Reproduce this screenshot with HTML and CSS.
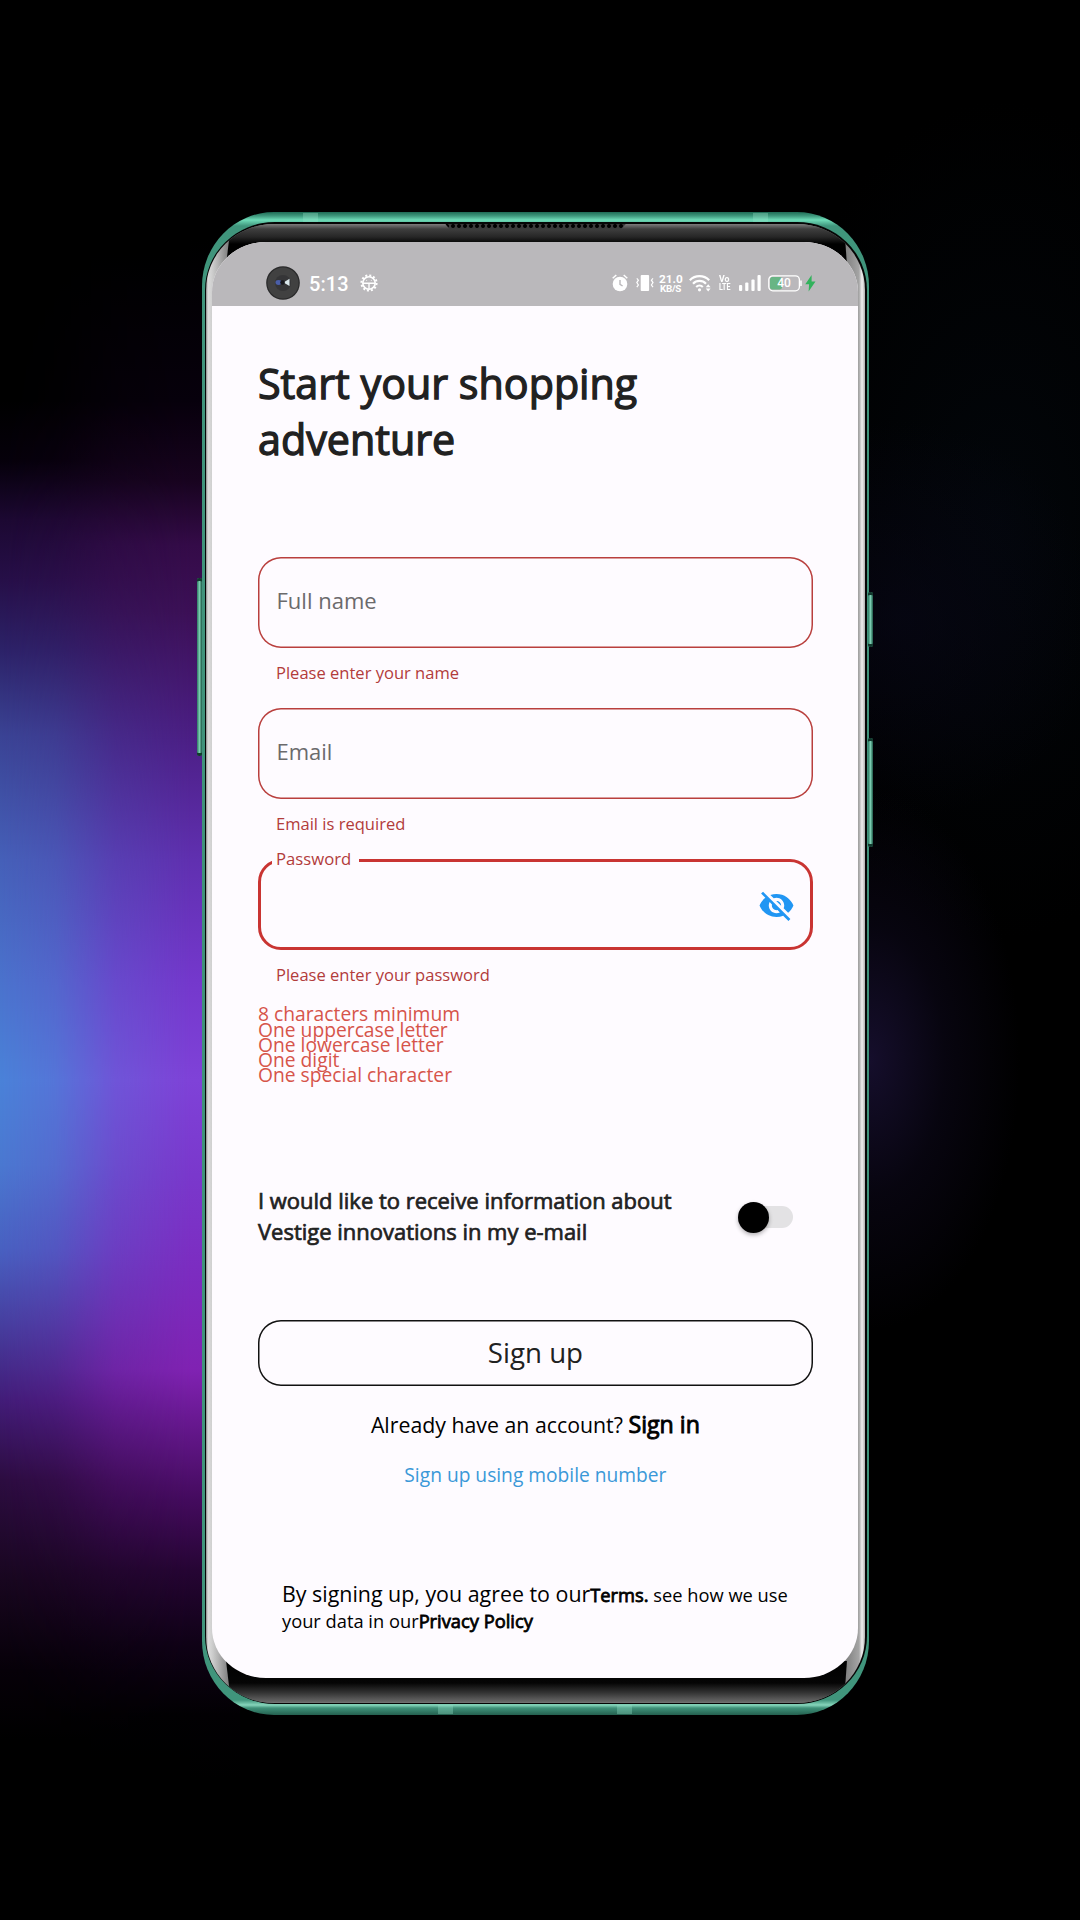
FILE: index.html
```html
<!DOCTYPE html>
<html lang="en">
<head>
<meta charset="utf-8">
<title>Sign up</title>
<link rel="stylesheet" href="styles.css">
</head>
<body>
<div class="phone">
  <i class="key key-left"></i>
  <i class="key key-right-top"></i>
  <i class="key key-right-bottom"></i>
  <i class="band band-t1"></i><i class="band band-t2"></i>
  <i class="band band-b1"></i><i class="band band-b2"></i>
  <div class="bezel">
    <div class="glass">
      <i class="shade shade-top"></i>
      <i class="shade shade-bottom"></i>
      <i class="speaker"></i>
      <main class="screen">
        <header class="status">
          <svg class="camera" width="34" height="34" viewBox="0 0 34 34">
            <circle cx="17" cy="17" r="16.8" fill="#29292a"/>
            <circle cx="17" cy="17" r="15.6" fill="#414141"/>
            <circle cx="17" cy="17" r="8" fill="#353537"/>
            <ellipse cx="12.5" cy="16.5" rx="3" ry="2.4" fill="#4a5ea8"/>
            <path d="M17.5 16.5l6-3.8v7.4z" fill="#d9e6ea"/>
            <circle cx="16.5" cy="16.5" r="2.3" fill="#17171c"/>
          </svg>
          <span class="clock">5:13</span>
          <svg class="gear" width="18" height="18" viewBox="0 0 18 18" fill="none" stroke="#fff">
            <circle cx="9" cy="9" r="6.2" stroke-width="1.6"/>
            <circle cx="9" cy="9" r="7.6" stroke-width="2" stroke-dasharray="2 1.98"/>
            <path d="M3 9.2h12M9 9.2v6" stroke-width="1.4"/>
            <path d="M6.3 6.4h.8M10.9 6.4h.8" stroke-width="1"/>
          </svg>
          <svg class="alarm" width="16" height="18" viewBox="0 0 16 18">
            <circle cx="8" cy="10" r="7.3" fill="#fff"/>
            <path d="M.7 4.3L4.3 1M15.3 4.3L11.7 1" stroke="#fff" stroke-width="1.5"/>
            <path d="M8 6v4.4l2.6 1.6" stroke="#bab8bb" stroke-width="1.4" fill="none"/>
          </svg>
          <svg class="vibrate" width="18" height="18" viewBox="0 0 18 18">
            <rect x="4.7" y="1" width="8.4" height="16" rx="1" fill="#fff"/>
            <path d="M.8 4.4l1.6 1.8-1.6 2.4 1.6 2.4-1.6 2.2M17 4.4l-1.6 1.8 1.6 2.4-1.6 2.4 1.6 2.2" stroke="#fff" stroke-width="1.2" fill="none"/>
          </svg>
          <span class="speed"><b>21.0</b><b class="unit">KB/S</b></span>
          <svg class="wifi" width="23" height="18" viewBox="0 0 23 18" fill="none" stroke="#fff" stroke-width="2.2">
            <path d="M.8 6.2a13.6 13.6 0 0 1 19.4 0M4 9.7a9 9 0 0 1 13 0M7.2 13a4.8 4.8 0 0 1 6.6 0"/>
            <circle cx="10.5" cy="15.8" r="1.6" fill="#fff" stroke="none"/>
            <path d="M16.8 13.2l2.4-3 2.4 3zM16.8 14.5l2.4 3 2.4-3z" fill="#fff" stroke="none"/>
          </svg>
          <span class="volte"><b>Vo</b><b>LTE</b></span>
          <svg class="signal" width="22" height="16" viewBox="0 0 22 16" fill="#fff">
            <rect x="0" y="10" width="3.2" height="6" rx="1"/><rect x="6.2" y="7.5" width="3.2" height="8.5" rx="1"/><rect x="12.4" y="4.5" width="3.2" height="11.5" rx="1"/><rect x="18.5" y="0" width="3.2" height="16" rx="1"/>
          </svg>
          <svg class="battery" width="34" height="17" viewBox="0 0 34 17">
            <rect x="2" y="2" width="12" height="12.6" rx="2.4" fill="#68b584"/>
            <rect x=".8" y=".8" width="30.6" height="15" rx="4" fill="none" stroke="#fff" stroke-width="1.3"/>
            <path d="M33 5.6v5.4" stroke="#fff" stroke-width="1.5"/>
            <text x="16" y="12.4" text-anchor="middle" class="charge">40</text>
          </svg>
          <svg class="bolt" width="11" height="17" viewBox="0 0 11 17"><path d="M6.6 0L.3 9.2h3.8L3.6 16.6 10.5 6.6H6.6z" fill="#32b25c"/></svg>
        </header>

        <form class="form">
          <h1 class="title">Start your shopping<br>adventure</h1>
          <div class="field"><div class="box">Full name</div><p class="error">Please enter your name</p></div>
          <div class="field"><div class="box">Email</div><p class="error">Email is required</p></div>
          <div class="field">
            <div class="box focused">
              <span class="float">Password</span>
              <svg class="eye" width="37" height="37" viewBox="0 0 24 24" fill="#2196f3"><path d="M12 7c2.76 0 5 2.24 5 5 0 .65-.13 1.26-.36 1.83l2.92 2.92c1.51-1.26 2.7-2.89 3.43-4.75-1.73-4.39-6-7.5-11-7.5-1.4 0-2.74.25-3.98.7l2.16 2.16C10.74 7.13 11.35 7 12 7zM2 4.27l2.28 2.28.46.46C3.08 8.3 1.78 10.02 1 12c1.73 4.39 6 7.5 11 7.5 1.55 0 3.03-.3 4.38-.84l.42.42L19.73 22 21 20.73 3.27 3 2 4.27zM7.53 9.8l1.55 1.55c-.05.21-.08.43-.08.65 0 1.66 1.34 3 3 3 .22 0 .44-.03.65-.08l1.55 1.55c-.67.33-1.41.53-2.2.53-2.76 0-5-2.24-5-5 0-.79.2-1.53.53-2.2zm4.31-.78l3.15 3.15.02-.16c0-1.66-1.34-3-3-3l-.17.01z"/></svg>
            </div>
            <p class="error">Please enter your password</p>
          </div>
          <ul class="rules">
            <li>8 characters minimum</li>
            <li>One uppercase letter</li>
            <li>One lowercase letter</li>
            <li>One digit</li>
            <li>One special character</li>
          </ul>
          <div class="optin">
            <p>I would like to receive information about<br>Vestige innovations in my e-mail</p>
            <span class="switch"><i class="thumb"></i></span>
          </div>
          <div class="submit">Sign up</div>
          <p class="signin">Already have an account? <b>Sign in</b></p>
          <p class="mobile">Sign up using mobile number</p>
          <p class="legal"><span class="lead">By signing up, you agree to our</span><b>Terms.</b> see how we use<br>your data in our<b>Privacy Policy</b></p>
        </form>
      </main>
    </div>
  </div>
</div>
</body>
</html>
```
FILE: styles.css
```css
* { box-sizing: border-box; margin: 0; padding: 0; }

body {
  position: relative;
  width: 1080px;
  height: 1920px;
  overflow: hidden;
  padding: 212px 0 0 202px;
  font-family: "Open Sans", "Noto Sans", sans-serif;
  background:
    radial-gradient(ellipse 150px 270px at 870px 1060px, rgba(30, 20, 62, .7), rgba(18, 12, 38, .4) 50%, transparent),
    radial-gradient(ellipse 200px 200px at 900px 620px, rgba(10, 8, 28, .5), transparent),
    radial-gradient(ellipse 240px 420px at 1000px 520px, rgba(3, 8, 14, .7), transparent),
    #000;
}

/* Coloured smoke behind the handset: purple near the phone, blue at the page edge */
body::before, body::after { content: ""; position: absolute; z-index: -1; left: 0; top: 0; width: 240px; height: 100%; }
body::before {
  background: linear-gradient(#000 240px, #07000c 400px, #18041f 480px, #340b48 545px, #3c1056 610px, #4c1f86 740px, #6030b0 860px, #7438cc 980px, #7f42d8 1080px, #7a38cc 1175px, #7c2cc0 1275px, #8022b2 1370px, #66188e 1425px, #440b5e 1500px, #260534 1570px, #0f0216 1645px, #020003 1715px, #000 1780px);
}
body::after {
  background: linear-gradient(#000 400px, #05000a 460px, #1c0832 520px, #260f48 580px, #2c2268 650px, #3a4394 735px, #4560b8 860px, #4a72cc 980px, #4a82d8 1080px, #4a78d0 1165px, #4860c0 1250px, #463c9c 1330px, #421c78 1400px, #2c0c40 1480px, #18061f 1580px, #060008 1670px, #000 1740px);
  -webkit-mask-image: linear-gradient(90deg, #000, rgba(0, 0, 0, .8) 55px, rgba(0, 0, 0, .3) 115px, transparent 190px);
  mask-image: linear-gradient(90deg, #000, rgba(0, 0, 0, .8) 55px, rgba(0, 0, 0, .3) 115px, transparent 190px);
}

/* Handset */
.phone {
  position: relative;
  width: 667px;
  height: 1503px;
  padding: 10px 2.5px 11px;
  border-radius: 72px / 74px;
  background: linear-gradient(#1f6b55 0, #3f9a7e 4px, #6fdcb8 8px, #40957c 14px, #3f917a 50%, #40957c 1488px, #86d5bb 1493px, #3f9179 1496px, #24604f 1503px);
}
.key { position: absolute; width: 5px; border-radius: 2px; background: linear-gradient(90deg, #2d7a63, #7accb0 50%, #1d5746); box-shadow: inset 0 4px 0 -1px #12392d, inset 0 -4px 0 -1px #12392d; }
.key-left { left: -5px; top: 366px; height: 178px; }
.key-right-top { right: -4px; top: 380px; height: 55px; }
.key-right-bottom { right: -4px; top: 526px; height: 109px; }
.band { position: absolute; width: 15px; height: 9px; background: rgba(150, 225, 200, .35); }
.band-t1 { left: 101px; top: 1px; }
.band-t2 { left: 551px; top: 1px; }
.band-b1 { left: 236px; bottom: 1px; }
.band-b2 { left: 415px; bottom: 1px; }
.bezel { position: relative; height: 100%; padding: 1.5px; border-radius: 70px / 68px; background: #050505; }
.glass {
  position: relative;
  height: 100%;
  padding: 18.5px 6.7px 25px 6px;
  border-radius: 68px / 66px;
  overflow: hidden;
  background: linear-gradient(90deg, #8b8b8b 0, #dcdcdc 2px, #cfcfcf 6px, #b4b4b4 12px, #777 24px, #777 635px, #8e8e8e 645px, #a5a5a5 653px, #f0f0f0 656px, #b0b0b0 100%);
}
.shade { position: absolute; left: 20px; right: 18px; height: 42px; }
.shade-top { top: 0; background: linear-gradient(#7c7c7c, #3e3e3e 5px, #262626 13px, #000 20px); clip-path: polygon(5px 0, 618px 0, 621px 42px, 0 42px); }
.shade-bottom { bottom: 0; background: linear-gradient(#000 0, #050505 22px, #353535 32px, #6e6e6e 42px); clip-path: polygon(0 0, 621px 0, 618px 42px, 5px 42px); }
.speaker {
  position: absolute; left: 238px; top: -1px; width: 183px; height: 7px;
  background: radial-gradient(circle at 3px 3px, #000 1.5px, #3a3a3a 2.4px) 0 0 / 6px 7px;
  clip-path: polygon(0 0, 100% 0, 177px 7px, 6px 7px);
}

.screen { position: relative; height: 100%; overflow: hidden; border-radius: 54px / 50px; background: #fefbff; }

/* Status bar */
.status { display: flex; align-items: center; height: 64px; padding: 17px 0 0 54px; background: #bab8bb; color: #fff; font-family: Roboto, sans-serif; }
.status svg { flex: none; }
.clock { width: 38px; margin: 2px 0 0 9px; font-size: 20px; font-weight: 500; line-height: 24px; letter-spacing: .1px; }
.gear { margin: 1px 0 0 13px; }
.alarm { margin: 1px 0 0 234px; }
.vibrate { margin: 1px 0 0 8px; }
.speed { width: 23px; margin: 3px 0 0 5px; }
.speed b, .volte b { display: block; font-weight: 700; white-space: nowrap; }
.speed b { font-size: 11.8px; line-height: 10px; }
.speed .unit { font-size: 9.8px; line-height: 10px; padding-left: 1px; letter-spacing: -.3px; }
.wifi { margin: 1px 0 0 7px; }
.volte { width: 12px; margin: 1px 0 0 7px; font-size: 9.5px; line-height: 8px; }
.volte b { transform: scaleX(.74); transform-origin: 0 0; }
.volte b:first-child { transform: scaleX(.92); }
.signal { margin-left: 7.5px; }
.battery { margin: 2px 0 0 7.5px; }
.charge { font: 500 12px Roboto, sans-serif; fill: #fff; }
.bolt { margin: 1px 0 0 3px; }

/* Form */
.form { padding: 49px 45.5px 0 46px; color: #212121; }
.title { margin-bottom: 90.3px; font-size: 41.25px; font-weight: 400; line-height: 56px; -webkit-text-stroke: 1.3px #212121; }
.field { height: 151px; }
.box { position: relative; height: 91px; padding: 26px 0 0 18.5px; border-radius: 23px; box-shadow: inset 0 0 0 1.5px #b93f3d; color: #6b6a6c; font-size: 22px; line-height: 34px; }
.focused { box-shadow: none; border: 3px solid #c93432; }
.error { margin-top: 14px; padding-left: 18px; font-size: 16.55px; line-height: 22px; color: #b23c3b; }
.float { position: absolute; left: 11px; top: -14px; width: 87px; padding-left: 4px; background: #fefbff; color: #b23c3b; font-size: 16.7px; line-height: 22px; }
.eye { position: absolute; right: 14.5px; top: 24.5px; }
.rules { margin-top: -4px; list-style: none; font-size: 19.25px; line-height: 15.25px; color: #d6544a; }
.optin { display: flex; align-items: center; justify-content: space-between; margin-top: 103.5px; padding-right: 20px; font-size: 21.98px; line-height: 30.5px; -webkit-text-stroke: .7px #212121; white-space: nowrap; }
.switch { width: 46px; height: 22px; margin-top: 1px; border-radius: 11px; background: #e3e2e4; }
.thumb { display: block; width: 31px; height: 31px; margin: -4.5px 0 0 -9px; border-radius: 50%; background: #000; box-shadow: 0 2px 4px rgba(0, 0, 0, .3); }
.submit { height: 66px; margin-top: 72.7px; border-radius: 23px; box-shadow: inset 0 0 0 1.5px #111; text-align: center; font-size: 27.7px; line-height: 64px; }
.signin { margin-top: 23px; text-align: center; font-size: 21.3px; line-height: 32px; color: #000; white-space: nowrap; }
b { font-weight: 400; }
.signin b { font-size: 23.2px; line-height: 0; -webkit-text-stroke: .9px #000; }
.mobile { margin-top: 21.5px; text-align: center; font-size: 19.2px; line-height: 26px; color: #3a98d8; }
.legal { margin: 94px 0 0 24px; font-size: 18.3px; line-height: 26px; color: #000; white-space: nowrap; }
.legal b { -webkit-text-stroke: .8px #000; }
.lead { font-size: 21.4px; line-height: 0; }
```
